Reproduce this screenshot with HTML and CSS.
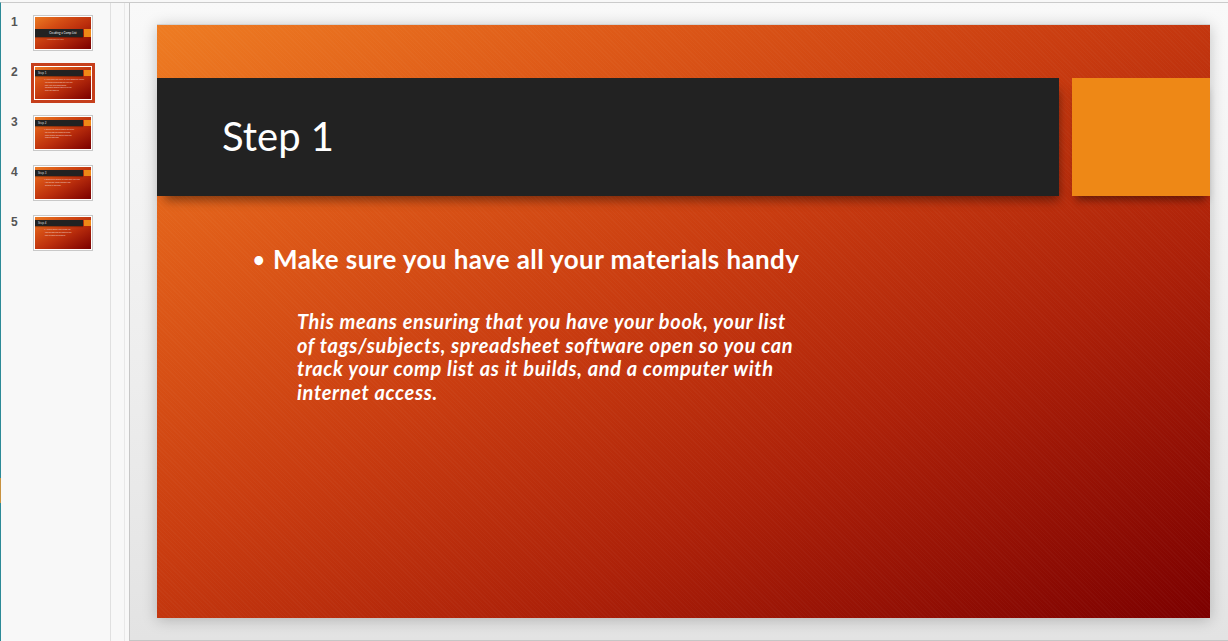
FILE: index.html
```html
<!DOCTYPE html>
<html>
<head>
<meta charset="utf-8">
<link rel="stylesheet" href="styles.css">
</head>
<body>
<div class="app">
  <span class="edge-mark"></span>
  <aside class="sidebar">
    <div class="thumb-row">
      <span class="num">1</span>
      <div class="thumb">
        <div class="mini mini-title">
          <div class="mini-bar-row mini-bar-row-title">
            <div class="mini-bar"><span class="mini-t1">Creating a Comp List</span></div>
            <div class="mini-sq"></div>
          </div>
          <div class="mini-sub">Finding books like yours</div>
        </div>
      </div>
    </div>
    <div class="thumb-row">
      <span class="num">2</span>
      <div class="thumb selected">
        <div class="mini">
          <div class="mini-bar-row">
            <div class="mini-bar"><span class="mini-t">Step 1</span></div>
            <div class="mini-sq"></div>
          </div>
          <div class="mini-b">• Make sure you have all your materials handy</div>
          <div class="mini-p">This means ensuring that you have your book, your list of tags/subjects, spreadsheet software open so you can track your comp list.</div>
        </div>
      </div>
    </div>
    <div class="thumb-row">
      <span class="num">3</span>
      <div class="thumb">
        <div class="mini">
          <div class="mini-bar-row">
            <div class="mini-bar"><span class="mini-t">Step 2</span></div>
            <div class="mini-sq"></div>
          </div>
          <div class="mini-b">• Search for books similar to yours</div>
          <div class="mini-p">Use your tags and subjects to search online retailers and note the titles that come up most often.</div>
        </div>
      </div>
    </div>
    <div class="thumb-row">
      <span class="num">4</span>
      <div class="thumb">
        <div class="mini">
          <div class="mini-bar-row">
            <div class="mini-bar"><span class="mini-t">Step 3</span></div>
            <div class="mini-sq"></div>
          </div>
          <div class="mini-b">• Record the details of each title you find</div>
          <div class="mini-p">Note the title, author, publisher, date and price of each book.</div>
        </div>
      </div>
    </div>
    <div class="thumb-row">
      <span class="num">5</span>
      <div class="thumb">
        <div class="mini">
          <div class="mini-bar-row">
            <div class="mini-bar"><span class="mini-t">Step 4</span></div>
            <div class="mini-sq"></div>
          </div>
          <div class="mini-b">• Narrow down your comp list</div>
          <div class="mini-p">Keep the titles that are closest to your book in subject and audience.</div>
        </div>
      </div>
    </div>
  </aside>
  <div class="gutter"></div>
  <main class="stage">
    <section class="slide">
      <div class="title-row">
        <div class="title-bar"><h1 class="title">Step 1</h1></div>
        <div class="title-square"></div>
      </div>
      <div class="bullet"><span class="dot">•</span><span>Make sure you have all your materials handy</span></div>
      <p class="detail">This means ensuring that you have your book, your list<br>of tags/subjects, spreadsheet software open so you can<br>track your comp list as it builds, and a computer with<br>internet access.</p>
    </section>
  </main>
</div>
</body>
</html>
```

FILE: styles.css
```css
* { box-sizing: border-box; }
html, body { margin: 0; padding: 0; }
body {
  width: 1228px;
  height: 641px;
  overflow: hidden;
  background: #f8f8f8;
  font-family: Lato, "Open Sans", sans-serif;
}
.app {
  position: relative;
  margin-top: 2px;
  height: 639px;
  border-top: 1px solid #cbcbcb;
  border-left: 1px solid #2c8a97;
  display: flex;
}
.edge-mark {
  position: absolute;
  left: -1px;
  top: 475px;
  width: 1px;
  height: 25px;
  background: #c8913f;
}
.sidebar {
  width: 110px;
  flex: none;
  border-right: 1px solid #e0e0e0;
  padding-top: 12px;
  display: flex;
  flex-direction: column;
  gap: 14px;
}
.thumb-row {
  display: flex;
  align-items: flex-start;
  height: 36px;
}
.num {
  width: 32px;
  padding-left: 10px;
  font-family: "Liberation Sans", Arial, sans-serif;
  font-weight: bold;
  font-size: 12px;
  color: #555;
  line-height: 14px;
}
.thumb {
  width: 60px;
  height: 36px;
  border: 1px solid #c9c9c9;
  padding: 1px;
  background: #fff;
}
.thumb.selected {
  width: 64px;
  height: 40px;
  margin-left: -2px;
  margin-top: -2px;
  border: 3px solid #c63f1c;
}
.mini {
  width: 56px;
  height: 32px;
  background: linear-gradient(to bottom right, #ec7a22 0%, #d44d14 30%, #bd300d 55%, #7b0000 100%);
  overflow: hidden;
  padding-top: 3px;
  font-family: Lato, sans-serif;
  color: #fff;
}
.mini-bar-row {
  display: flex;
  gap: 1px;
  height: 6px;
}
.mini-bar {
  width: 48px;
  background: #222;
  display: flex;
  align-items: center;
  padding-left: 3px;
  box-shadow: 0 1px 1px rgba(0,0,0,.3);
}
.mini-sq { flex: 1; background: #ee8816; }
.mini-t { font-size: 3px; line-height: 3px; color: #ddd; }
.mini-b {
  font-size: 2px;
  line-height: 3px;
  margin: 2px 0 0 9px;
  color: rgba(255,255,255,.7);
  white-space: nowrap;
}
.mini-p {
  font-size: 1.6px;
  line-height: 2.6px;
  margin: 0 0 0 10px;
  width: 28px;
  color: rgba(255,255,255,.75);
}
.mini-title { padding-top: 12px; }
.mini-bar-row-title { height: 8px; }
.mini-bar-row-title .mini-bar { justify-content: center; padding-left: 8px; }
.mini-t1 { font-size: 3px; color: #eee; white-space: nowrap; }
.mini-sub {
  font-size: 1.6px;
  margin: 1px 0 0 12px;
  color: rgba(255,255,255,.6);
  white-space: nowrap;
}
.gutter {
  width: 18px;
  flex: none;
  background: linear-gradient(to right, transparent 13px, #e8e8e8 13px, #e8e8e8 14px, transparent 14px);
}
.stage {
  flex: 1;
  border-left: 1px solid #c6c6c6;
  border-bottom: 1px solid #c6c6c6;
  background: linear-gradient(to bottom, #f9f9f9 0%, #ededed 60%, #e3e3e3 100%);
  padding: 21px 0 0 27px;
}
.slide {
  width: 1053px;
  height: 594px;
  border-top: 1px solid #d2d2d2;
  box-shadow: 0 2px 14px rgba(0,0,0,.22);
  background:
    repeating-linear-gradient(45deg, rgba(255,255,255,0.025) 0 1px, rgba(0,0,0,0) 1px 3px),
    linear-gradient(to bottom right, #ee7c22 0%, #de5a18 22%, #c93c10 45%, #ad2109 68%, #7c0000 100%);
  padding-top: 53px;
  color: #fff;
}
.title-row {
  display: flex;
  gap: 13px;
  height: 118px;
}
.title-bar {
  width: 902px;
  background: #222;
  display: flex;
  align-items: center;
  padding-left: 65px;
  box-shadow: 4px 8px 10px -4px rgba(0,0,0,.45);
}
.title {
  margin: 0;
  font-family: Lato, sans-serif;
  font-weight: normal;
  font-size: 40px;
  line-height: 48px;
  color: #fff;
  padding-bottom: 2px;
}
.title-square {
  flex: 1;
  background: #ee8816;
  box-shadow: 0 8px 8px -4px rgba(0,0,0,.45);
}
.bullet {
  display: flex;
  margin: 48px 0 0 96px;
  font-size: 26px;
  font-weight: bold;
  letter-spacing: 0.4px;
  line-height: 30px;
}
.dot { width: 20px; font-size: 20px; letter-spacing: 0; }
.detail {
  margin: 36px 0 0 140px;
  font-size: 20px;
  font-style: italic;
  font-weight: bold;
  letter-spacing: 0.65px;
  line-height: 23.5px;
}
```
